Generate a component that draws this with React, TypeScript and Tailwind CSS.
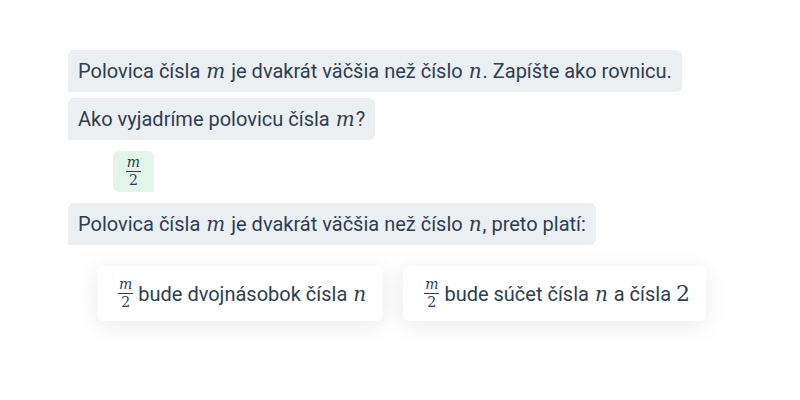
import type { ReactNode } from "react";

/** Inline math glyph, rendered in a serif italic close to KaTeX. */
function M({ children }: { children: ReactNode }) {
  return <span className="mx-[1px] font-['DejaVu_Serif',serif] text-[20px] italic">{children}</span>;
}

function Frac({ top, bottom }: { top: string; bottom: string }) {
  return (
    <span className="inline-flex flex-col items-center align-middle font-['DejaVu_Serif',serif] text-[14px] leading-[15px]">
      <span className="italic border-b border-[#2d3e50] px-[1px] pb-[1px]">{top}</span>
      <span className="pt-[1px]">{bottom}</span>
    </span>
  );
}

function Bubble({ children }: { children: ReactNode }) {
  return (
    <div className="flex h-[42px] items-center rounded-md rounded-bl-none bg-[#eceff1] px-2.5 text-[20px] text-[#2d3e50]">
      {children}
    </div>
  );
}

function Choice({ children }: { children: ReactNode }) {
  return (
    <button className="flex h-[55px] items-center gap-[5px] rounded-md bg-white pl-[21px] pr-[16px] text-[20px] text-[#2d3e50] shadow-[0_4px_24px_rgba(0,0,0,0.09)]">
      {children}
    </button>
  );
}

export default function App() {
  return (
    <div className="flex h-[400px] w-[800px] flex-col items-start bg-white pl-[68px] pt-[50px] font-['Roboto',sans-serif]">
      <Bubble>
        <span>
          Polovica čísla <M>m</M> je dvakrát väčšia než číslo <M>n</M>. Zapíšte ako rovnicu.
        </span>
      </Bubble>
      <div className="mt-[6px]">
        <Bubble>
          <span>
            Ako vyjadríme polovicu čísla <M>m</M>?
          </span>
        </Bubble>
      </div>
      <div className="ml-[45px] mt-[11px] flex h-[41px] w-[41px] items-center justify-center rounded-md rounded-br-none bg-[#e3f4ea] text-[#2d3e50]">
        <Frac top="m" bottom="2" />
      </div>
      <div className="mt-[11px]">
        <Bubble>
          <span>
            Polovica čísla <M>m</M> je dvakrát väčšia než číslo <M>n</M>, preto platí:
          </span>
        </Bubble>
      </div>
      <div className="ml-[29px] mt-[21px] flex gap-5">
        <Choice>
          <Frac top="m" bottom="2" />
          <span>
            bude dvojnásobok čísla <M>n</M>
          </span>
        </Choice>
        <Choice>
          <Frac top="m" bottom="2" />
          <span>
            bude súčet čísla <M>n</M> a čísla <span className="font-['DejaVu_Serif',serif] text-[22px]">2</span>
          </span>
        </Choice>
      </div>
    </div>
  );
}
